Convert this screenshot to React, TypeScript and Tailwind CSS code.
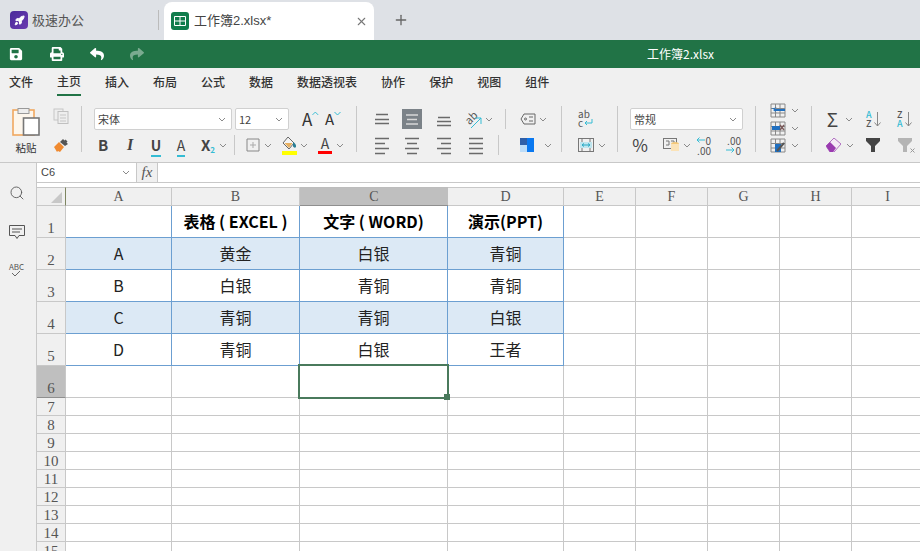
import clsx from "clsx";
import { Rocket, Search, X, Plus } from "lucide-react";
import { FaSave, FaPrint, FaReply, FaShare } from "react-icons/fa";

const menus = ["文件", "主页", "插入", "布局", "公式", "数据", "数据透视表", "协作", "保护", "视图", "组件"];
const columns = ["A", "B", "C", "D", "E", "F", "G", "H", "I"];
const tableRows = [
  ["", "表格 ( EXCEL )", "文字 ( WORD)", "演示(PPT)"],
  ["A", "黄金", "白银", "青铜"],
  ["B", "白银", "青铜", "青铜"],
  ["C", "青铜", "青铜", "白银"],
  ["D", "青铜", "白银", "王者"],
];
const smallRows = [7, 8, 9, 10, 11, 12, 13, 14, 15];

function Chevron({ className }: { className?: string }) {
  return (
    <svg width="8" height="5" viewBox="0 0 8 5" className={clsx("shrink-0", className)}>
      <path d="M1 1l3 3 3-3" fill="none" stroke="#8a8a8a" strokeWidth="1" />
    </svg>
  );
}

function Divider() {
  return <div className="mt-[8px] h-[46px] w-px shrink-0 bg-[#c8c8c8]" />;
}

function RowDivider({ className }: { className?: string }) {
  return <div className={clsx("h-[20px] w-px shrink-0 bg-[#c8c8c8]", className)} />;
}

function Lines({ kind, active }: { kind: "top" | "mid" | "bottom" | "left" | "center" | "right" | "full"; active?: boolean }) {
  const stroke = active ? "#d8d8d8" : "#6a6a6a";
  const paths = {
    top: "M4 5.5h12M3 10.5h14M3 14.5h14",
    mid: "M4 6h12M5 10.5h10M4 15h12",
    bottom: "M4 8.5h12M3 12.5h14M3 16.5h14",
    left: "M3 3.5h14M3 8.5h10M3 13.5h14M3 18.5h10",
    center: "M3 3.5h14M5 8.5h10M3 13.5h14M5 18.5h10",
    right: "M3 3.5h14M7 8.5h10M3 13.5h14M7 18.5h10",
    full: "M3 3.5h14M3 8.5h14M3 13.5h14M3 18.5h14",
  };
  return (
    <svg width="20" height="20" viewBox="0 0 20 20" className="shrink-0">
      <path d={paths[kind]} fill="none" stroke={stroke} strokeWidth="1.4" />
    </svg>
  );
}

function PasteIcon() {
  return (
    <svg width="28" height="28" viewBox="0 0 28 28">
      <rect x="1" y="2" width="21" height="25" fill="#fdf6ec" stroke="#f0a860" strokeWidth="1.6" />
      <rect x="6" y="0.5" width="11" height="5" fill="#eee" stroke="#999" />
      <rect x="11.5" y="10" width="15.5" height="17" fill="#fff" stroke="#777" strokeWidth="1.6" />
    </svg>
  );
}

function CopyIcon() {
  return (
    <svg width="16" height="16" viewBox="0 0 16 16">
      <rect x="1" y="1" width="9" height="11" fill="#eee" stroke="#c6c6c6" />
      <rect x="5" y="3.5" width="10" height="12" fill="#eee" stroke="#c0c0c0" />
      <path d="M7 7h6M7 10h6M7 13h6" stroke="#c6c6c6" />
    </svg>
  );
}

function BrushIcon() {
  return (
    <svg width="16" height="16" viewBox="0 0 16 16">
      <path d="M1 10l5-5 5 5-4 5-2-1-1 1z" fill="#f08a30" />
      <path d="M7 5l3-3 1.5 1.5 1-1 2 2-1 1L15 7l-3 2z" fill="#555" />
    </svg>
  );
}

function FillIcon() {
  return (
    <div className="flex w-[18px] flex-col items-center">
      <svg width="16" height="15" viewBox="0 0 16 15">
        <path d="M7 1l6 6-5 6-6-6z" fill="#f4f4f4" stroke="#666" />
        <path d="M3.5 7h8L8 12z" fill="#e8b060" />
        <path d="M12 6q3.5 2 3 5-1.5 1.5-3-.5z" fill="#2b7f95" />
      </svg>
      <div className="h-[4px] w-[15px] bg-[#ffff00]" />
    </div>
  );
}

function SizeIcon({ up }: { up?: boolean }) {
  return (
    <div className={clsx("flex items-start", up ? "w-[17px]" : "w-[18px]")}>
      <span className={clsx("leading-[20px] text-[#333]", up ? "text-[17px]" : "text-[15px]")}>A</span>
      <svg width="7" height="5" viewBox="0 0 7 5" className="mt-[2px]">
        <path d={up ? "M0.5 4L3.5 1l3 3" : "M0.5 1l3 3 3-3"} fill="none" stroke="#35bcd4" />
      </svg>
    </div>
  );
}

function OrientIcon() {
  return (
    <div className="relative h-[20px] w-[18px]">
      <span className="absolute left-[0px] top-[2px] -rotate-45 text-[11px] leading-[12px] text-[#555]">ab</span>
      <svg width="12" height="12" viewBox="0 0 12 12" className="absolute bottom-[0px] right-[0px]">
        <path d="M1 11L11 1M5 1h6v6" fill="none" stroke="#35bcd4" />
      </svg>
    </div>
  );
}

function TagIcon() {
  return (
    <svg width="16" height="12" viewBox="0 0 16 12">
      <path d="M4 1h11v10H4L1 6z" fill="none" stroke="#666" />
      <circle cx="5.5" cy="6" r="1" fill="none" stroke="#666" />
      <path d="M9 4h4M9 8h4" stroke="#666" />
    </svg>
  );
}

function BlocksIcon() {
  return (
    <svg width="14" height="14" viewBox="0 0 14 14">
      <rect width="7" height="7" fill="#2f5fa8" />
      <rect x="7" width="7" height="7" fill="#0a78f0" />
      <rect y="7" width="7" height="7" fill="#bcdcf8" />
      <rect x="7" y="7" width="7" height="7" fill="#0a78f0" />
    </svg>
  );
}

function MergeIcon() {
  return (
    <svg width="16" height="14" viewBox="0 0 16 14">
      <rect x="0.5" y="0.5" width="15" height="13" fill="none" stroke="#777" />
      <rect x="2" y="4" width="12" height="6" fill="#bfe6ef" />
      <path d="M4 7h8M4 7l2-1.5M4 7l2 1.5M12 7l-2-1.5M12 7l-2 1.5" fill="none" stroke="#2aaac4" />
      <path d="M4 0v4M12 0v4M4 10v4M12 10v4" stroke="#777" />
    </svg>
  );
}

function RowsIcon({ kind }: { kind: "insert" | "remove" | "format" }) {
  return (
    <svg width="16" height="15" viewBox="0 0 16 15" className="shrink-0">
      <path d="M1 1h14v13H1zM1 5.5h14M1 10h14M5.5 1v13M10 1v13" fill="none" stroke="#888" />
      {kind === "insert" && <path d="M1 6h14v2H5l2 2-4-3 4-3z" fill="#1f6fc0" />}
      {kind === "remove" && (
        <>
          <rect x="2" y="5" width="8" height="4" fill="#1f6fc0" />
          <path d="M10 4l4 5M14 4l-4 5" stroke="#7a5a5a" strokeWidth="1.5" />
        </>
      )}
      {kind === "format" && (
        <>
          <rect x="5" y="6" width="6" height="8" fill="#1f6fc0" />
          <path d="M7 13l7-8" stroke="#555" strokeWidth="2" />
        </>
      )}
    </svg>
  );
}

function SortIcon({ top, bottom }: { top: string; bottom: string }) {
  return (
    <div className="flex w-[15px] items-center">
      <div className="flex w-[7px] flex-col text-[9px] font-medium leading-[9px]">
        <span className={top === "A" ? "text-[#35bcd4]" : "text-[#555]"}>{top}</span>
        <span className={bottom === "A" ? "text-[#35bcd4]" : "text-[#555]"}>{bottom}</span>
      </div>
      <svg width="7" height="15" viewBox="0 0 7 15" className="ml-[1px]">
        <path d="M3.5 0v14M0.5 10.5l3 3.5 3-3.5" fill="none" stroke="#888" />
      </svg>
    </div>
  );
}

function FilterIcon({ dim }: { dim?: boolean }) {
  return (
    <div className="relative h-[15px] w-[15px]">
      <svg width="14" height="14" viewBox="0 0 14 14">
        <path d="M0 0h14v3L9 8v6H5V8L0 3z" fill={dim ? "#b4b4b4" : "#444"} />
      </svg>
      {dim && (
        <svg width="5" height="5" viewBox="0 0 5 5" className="absolute bottom-[0px] right-[-2px]">
          <path d="M0.5 0.5l4 4M4.5 0.5l-4 4" stroke="#999" />
        </svg>
      )}
    </div>
  );
}

function DecimalIcon({ more }: { more?: boolean }) {
  return (
    <div className="flex h-[19px] w-[16px] flex-col items-end text-[10px] leading-[9px] text-[#555]">
      <div className="flex h-[9px] items-center">
        {!more && (
          <svg width="9" height="6" viewBox="0 0 9 6">
            <path d="M9 3H1M3.5 0.5L1 3l2.5 2.5" fill="none" stroke="#35bcd4" />
          </svg>
        )}
        <span>{more ? ".00" : "0"}</span>
      </div>
      <div className="mt-[1px] flex h-[9px] items-center">
        {more && (
          <svg width="9" height="6" viewBox="0 0 9 6">
            <path d="M0 3h8M5.5 0.5L8 3 5.5 5.5" fill="none" stroke="#35bcd4" />
          </svg>
        )}
        <span>{more ? "0" : ".00"}</span>
      </div>
    </div>
  );
}

function Select({ text, className }: { text: string; className: string }) {
  return (
    <div className={clsx("flex h-[22px] items-center justify-between rounded-[2px] border border-[#d0d0d0] bg-white pl-[3px] pr-[5px] text-[11px] text-[#444]", className)}>
      <span>{text}</span>
      <Chevron />
    </div>
  );
}

function Ribbon() {
  return (
    <div className="flex h-[65px] shrink-0 items-start border-b border-[#c8c8c8] bg-[#f0f0f0]">
      <div className="flex w-[81px] shrink-0 pl-[12px] pt-[10px]">
        <div className="flex w-[28px] flex-col items-center">
          <PasteIcon />
          <span className="mt-[5px] text-[10.5px] leading-[14px] text-[#333]">粘贴</span>
        </div>
        <div className="ml-[13px] flex flex-col items-center gap-[13px]">
          <CopyIcon />
          <BrushIcon />
        </div>
      </div>
      <Divider />

      <div className="w-[274px] shrink-0 pt-[10px]">
        <div className="flex h-[22px] items-center pl-[12px]">
          <Select text="宋体" className="w-[138px]" />
          <Select text="12" className="ml-[3px] w-[54px]" />
          <div className="ml-[13px]"><SizeIcon up /></div>
          <div className="ml-[6px]"><SizeIcon /></div>
        </div>
        <div className="mt-[5px] flex h-[20px] items-center pl-[8px] text-[#444]">
          <span className="w-[26px] text-center text-[15px] font-bold">B</span>
          <span className="w-[28px] text-center font-['Liberation_Serif',serif] text-[16px] font-bold italic">I</span>
          <span className="w-[24px] text-center text-[14px] font-semibold"><span className="border-b-2 border-[#35bcd4] leading-[14px]">U</span></span>
          <span className="w-[26px] text-center text-[14px]"><span className="border-b-2 border-[#35bcd4] leading-[14px]">A</span></span>
          <span className="ml-[3px] w-[22px] text-center text-[15px] font-bold">X<sub className="text-[8px] text-[#35bcd4]">2</sub></span>
          <Chevron />
          <RowDivider className="ml-[7px]" />
          <svg width="14" height="14" viewBox="0 0 14 14" className="ml-[11px]">
            <path d="M1 1h12v12H1z" fill="none" stroke="#888" />
            <path d="M7 4v6M4 7h6" stroke="#aaa" />
          </svg>
          <Chevron className="ml-[4px]" />
          <div className="ml-[8px]"><FillIcon /></div>
          <Chevron className="ml-[2px]" />
          <div className="ml-[9px] flex w-[16px] flex-col items-center">
            <span className="text-[14px] leading-[15px]">A</span>
            <div className="h-[3px] w-[14px] bg-[#ff0000]" />
          </div>
          <Chevron className="ml-[3px]" />
        </div>
      </div>
      <Divider />

      <div className="w-[204px] shrink-0 pt-[10px]">
        <div className="flex h-[22px] items-center pl-[15px]">
          <Lines kind="top" />
          <div className="ml-[10px] bg-[#7b8288]"><Lines kind="mid" active /></div>
          <div className="ml-[12px]"><Lines kind="bottom" /></div>
          <div className="ml-[10px]"><OrientIcon /></div>
          <Chevron className="ml-[3px]" />
          <RowDivider className="ml-[12px]" />
          <div className="ml-[14px]"><TagIcon /></div>
          <Chevron className="ml-[3px]" />
        </div>
        <div className="mt-[5px] flex h-[20px] items-center pl-[15px]">
          <Lines kind="left" />
          <div className="ml-[10px]"><Lines kind="center" /></div>
          <div className="ml-[12px]"><Lines kind="right" /></div>
          <div className="ml-[12px]"><Lines kind="full" /></div>
          <RowDivider className="ml-[12px]" />
          <div className="ml-[21px]"><BlocksIcon /></div>
          <Chevron className="ml-[10px]" />
        </div>
      </div>
      <Divider />

      <div className="w-[55px] shrink-0 pl-[16px] pt-[10px]">
        <div className="flex h-[22px] flex-col items-start text-[10px] leading-[9px] text-[#555]">
          <span className="mt-[1px]">ab</span>
          <span className="flex items-center">c
            <svg width="9" height="8" viewBox="0 0 9 8" className="ml-[1px]">
              <path d="M8 0v4H1M3 2L1 4l2 2" fill="none" stroke="#35bcd4" />
            </svg>
          </span>
        </div>
        <div className="mt-[5px] flex h-[20px] items-center">
          <MergeIcon />
          <Chevron className="ml-[4px]" />
        </div>
      </div>
      <Divider />

      <div className="w-[137px] shrink-0 pt-[10px]">
        <Select text="常规" className="ml-[12px] w-[113px]" />
        <div className="mt-[5px] flex h-[20px] items-center pl-[13px]">
          <span className="w-[18px] text-center text-[17px] leading-[20px] text-[#444]">%</span>
          <svg width="16" height="14" viewBox="0 0 16 14" className="ml-[14px]">
            <rect x="0.5" y="0.5" width="13" height="10" fill="none" stroke="#777" />
            <path d="M3 3h3v4H3M8 3h3v4H8" fill="none" stroke="#777" />
            <ellipse cx="12" cy="6" rx="4" ry="2" fill="#f5c97a" />
            <rect x="8" y="6" width="8" height="7" fill="#fbe3b8" />
          </svg>
          <Chevron className="ml-[4px]" />
          <div className="ml-[4px]"><DecimalIcon /></div>
          <div className="ml-[14px]"><DecimalIcon more /></div>
        </div>
      </div>
      <Divider />

      <div className="flex h-[54px] w-[55px] shrink-0 flex-col gap-[2.5px] pl-[14px] pt-[5px]">
        <div className="flex items-center"><RowsIcon kind="insert" /><Chevron className="ml-[5px]" /></div>
        <div className="flex items-center"><RowsIcon kind="remove" /><Chevron className="ml-[5px]" /></div>
        <div className="flex items-center"><RowsIcon kind="format" /><Chevron className="ml-[5px]" /></div>
      </div>
      <Divider />

      <div className="flex-1 pt-[10px]">
        <div className="flex h-[22px] items-center pl-[13px]">
          <span className="w-[15px] text-center text-[19px] leading-[20px] text-[#444]">Σ</span>
          <Chevron className="ml-[5px]" />
          <div className="ml-[13px]"><SortIcon top="A" bottom="Z" /></div>
          <div className="ml-[16px]"><SortIcon top="Z" bottom="A" /></div>
        </div>
        <div className="mt-[5px] flex h-[20px] items-center pl-[14px]">
          <svg width="15" height="14" viewBox="0 0 15 14">
            <path d="M0 8l8-8 7 6-7 8H4z" fill="#f4e8f6" stroke="#b070c0" />
            <path d="M0 8l4-4 6 6-3 4H4z" fill="#9a3ab0" />
          </svg>
          <Chevron className="ml-[5px]" />
          <div className="ml-[12px]"><FilterIcon /></div>
          <div className="ml-[17px]"><FilterIcon dim /></div>
        </div>
      </div>
    </div>
  );
}

function Sheet() {
  return (
    <div className="grid min-h-0 flex-1 grid-cols-[29px_106px_128px_148px_116px_72px_72px_72px_72px_72px] grid-rows-[19px_32px_32px_32px_32px_32px_32px_18px_18px_18px_18px_18px_18px_18px_18px_18px] overflow-hidden bg-white font-['Liberation_Serif',serif] text-[15px] text-[#555]">
      <div className="relative border-b border-r border-t border-[#c8c8c8] border-r-[#7d8560] bg-[#f0f0f0]">
        <div className="absolute bottom-[2px] right-[3px] h-0 w-0 border-b-[11px] border-l-[11px] border-b-[#c8c8c8] border-l-transparent" />
      </div>
      {columns.map((c) => (
        <div
          key={c}
          className={clsx(
            "flex items-center justify-center border-t text-[14px]",
            c === "C"
              ? "border-b border-[#8f8f8f] border-t-[#bdbdbd] bg-[#bfbfbf]"
              : "border-b border-r border-[#c8c8c8] bg-[#f0f0f0]",
          )}
        >
          {c}
        </div>
      ))}

      {tableRows.map((row, i) => (
        <div key={i} className="contents">
          <div className="flex items-end justify-center border-b border-r border-[#c8c8c8] bg-[#f0f0f0] leading-[18px]">
            {i + 1}
          </div>
          {row.map((cell, j) => (
            <div
              key={j}
              className={clsx(
                "flex items-center justify-center whitespace-pre border-b border-r border-[#6c9fd1] pb-[2px] font-['Noto_Sans_CJK_SC',sans-serif]",
                i === 0 ? "text-[16px] font-bold text-black" : "text-[16px] text-[#222]",
                (i === 1 || i === 3) && "bg-[#dce9f5]",
              )}
            >
              {cell}
            </div>
          ))}
          {[0, 1, 2, 3, 4].map((k) => (
            <div key={k} className="border-b border-r border-[#c8c8c8]" />
          ))}
        </div>
      ))}

      <div className="flex items-end justify-center border-b border-r border-[#8f8f8f] border-r-[#c8c8c8] bg-[#bfbfbf] leading-[18px]">6</div>
      <div className="border-b border-r border-[#c8c8c8]" />
      <div className="border-b border-r border-[#c8c8c8]" />
      <div className="relative border-b border-r border-[#c8c8c8]">
        <div className="absolute -left-[2px] -top-[2px] bottom-[-2px] right-[-2px] border-2 border-[#4a7a5c]" />
        <div className="absolute bottom-[-3px] right-[-3px] h-[6px] w-[6px] bg-[#4a7a5c]" />
      </div>
      {[0, 1, 2, 3, 4, 5].map((k) => (
        <div key={k} className="border-b border-r border-[#c8c8c8]" />
      ))}

      {smallRows.map((n) => (
        <div key={n} className="contents">
          <div className="flex items-center justify-center border-b border-r border-[#c8c8c8] bg-[#f0f0f0] leading-[18px]">{n}</div>
          {columns.map((c) => (
            <div key={c} className="border-b border-r border-[#c8c8c8]" />
          ))}
        </div>
      ))}
    </div>
  );
}

export default function App() {
  return (
    <div className="flex h-[551px] w-[920px] flex-col overflow-hidden bg-[#f0f0f0] font-['Noto_Sans_CJK_SC',sans-serif]">
      <div className="flex h-[40px] shrink-0 items-end bg-[#dee1e6]">
        <div className="flex h-[40px] w-[158px] items-center pl-[10px]">
          <div className="flex h-[18px] w-[18px] items-center justify-center rounded-[4px] bg-gradient-to-br from-[#4a2a9a] to-[#6a3ab0]">
            <Rocket size={11} color="#fff" fill="#fff" />
          </div>
          <span className="ml-[4px] text-[13px] text-[#555]">极速办公</span>
        </div>
        <div className="mb-[10px] h-[20px] w-px bg-[#bbb]" />
        <div className="ml-[5px] flex h-[38px] w-[210px] items-center rounded-t-[8px] bg-white pl-[7px] pr-[6px]">
          <div className="flex h-[18px] w-[18px] items-center justify-center rounded-[3px] bg-[#107c4c]">
            <svg width="12" height="10" viewBox="0 0 12 10">
              <path d="M0.5 0.5h11v9h-11zM0.5 5h11M6 0.5v9" fill="none" stroke="#fff" />
            </svg>
          </div>
          <span className="ml-[5px] flex-1 font-['Liberation_Sans','Noto_Sans_CJK_SC',sans-serif] text-[13px] text-[#444]">工作簿2.xlsx*</span>
          <X size={13} color="#777" />
        </div>
        <Plus size={16} color="#666" className="mb-[12px] ml-[19px]" />
      </div>

      <div className="flex h-[28px] shrink-0 items-center bg-[#217346] text-white">
        <FaSave size={14} className="ml-[9px]" />
        <FaPrint size={14} className="ml-[27px]" />
        <FaReply size={14} className="ml-[26px]" />
        <FaShare size={14} className="ml-[26px] opacity-40" />
        <span className="ml-[503px] text-[12px]">工作簿2.xlsx</span>
      </div>

      <div className="flex h-[30px] shrink-0 gap-[24px] bg-[#f0f0f0] pl-[9px] text-[12px] font-medium text-[#333]">
        {menus.map((m) => (
          <div key={m} className={clsx("flex h-[28px] items-center", m === "主页" && "border-b-2 border-[#217346]")}>
            {m}
          </div>
        ))}
      </div>

      <Ribbon />

      <div className="flex min-h-0 flex-1">
        <div className="flex w-[37px] shrink-0 flex-col items-center border-r border-[#c8c8c8] pr-[3px] pt-[22px] text-[#555]">
          <Search size={16} strokeWidth={1.3} />
          <svg width="16" height="15" viewBox="0 0 16 15" className="mt-[24px]">
            <path d="M0.5 0.5h15v10H10l-2 3-2-3H0.5zM3 4h10M3 7h8" fill="none" stroke="#555" />
          </svg>
          <div className="mt-[23px] flex flex-col items-center">
            <span className="text-[8px] leading-[8px]">ABC</span>
            <svg width="10" height="6" viewBox="0 0 10 6">
              <path d="M1 2l3 3 5-5" fill="none" stroke="#666" />
            </svg>
          </div>
        </div>
        <div className="flex min-w-0 flex-1 flex-col">
          <div className="flex h-[20px] shrink-0 border-b border-[#c8c8c8] bg-white">
            <div className="flex w-[100px] items-center justify-between border-r border-[#c8c8c8] pl-[4px] pr-[6px] font-['Liberation_Sans',sans-serif] text-[11px] text-[#444]">
              C6
              <Chevron />
            </div>
            <div className="flex w-[21px] items-center justify-center border-r border-[#c8c8c8] bg-[#f0f0f0] font-['Liberation_Serif',serif] text-[15px] italic text-[#555]">
              fx
            </div>
          </div>
          <div className="h-[4px] shrink-0 bg-white" />
          <Sheet />
        </div>
      </div>
    </div>
  );
}
